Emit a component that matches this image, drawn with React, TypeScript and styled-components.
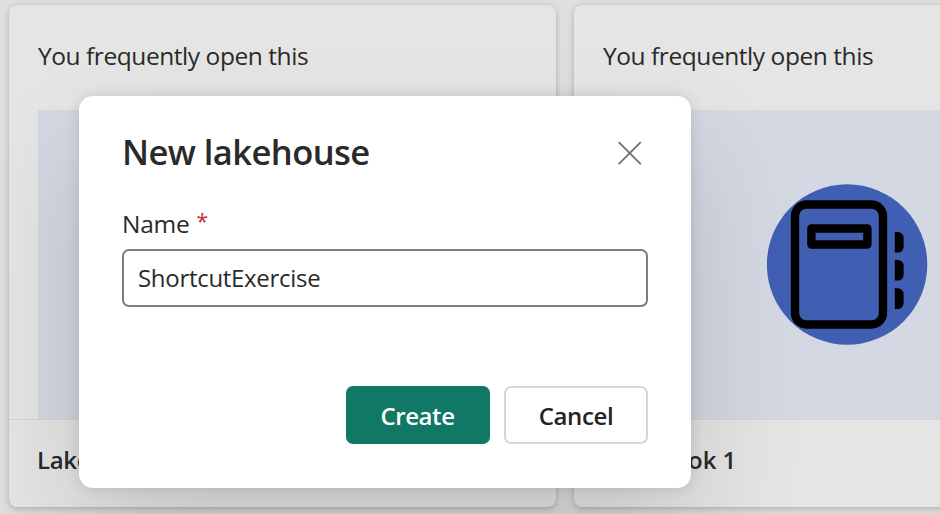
import React from "react";
import styled, { createGlobalStyle } from "styled-components";

const GlobalStyle = createGlobalStyle`
  * { box-sizing: border-box; }
  body {
    margin: 0;
    overflow: hidden;
    font-family: "Open Sans", "Noto Sans", sans-serif;
    font-size: 24.5px;
    color: #2a2a2a;
  }
  button, input { font: inherit; color: inherit; }
`;

const Page = styled.main`
  position: relative;
  width: 940px;
  height: 514px;
  overflow: hidden;
  background: #dfdfdf;
`;

const CardRow = styled.section`
  display: flex;
  gap: 18px;
  padding: 5px 0 0 9px;
`;

const Card = styled.article`
  flex: 0 0 547px;
  height: 502px;
  display: flex;
  flex-direction: column;
  border-radius: 8px;
  background: #e5e5e5;
  box-shadow: 0 0 4px rgba(0, 0, 0, 0.1), 0 3px 7px rgba(0, 0, 0, 0.14);
`;

const Reason = styled.p`
  margin: 0;
  height: 105px;
  padding: 34px 0 0 29px;
  line-height: 34px;
  letter-spacing: -0.44px;
  white-space: nowrap;
`;

const Preview = styled.div`
  height: 309px;
  margin: 0 29px;
  padding-top: 74px;
  display: flex;
  justify-content: center;
  align-items: flex-start;
  background: #d4d8e2;

  svg { display: block; }
`;

const CardTitle = styled.h3<{ $tracking: number }>`
  flex: 1;
  margin: 0;
  padding: 23px 0 0 28px;
  border-top: 1px solid #d2d2d2;
  font-size: 24px;
  font-weight: 600;
  line-height: 34px;
  letter-spacing: ${(p) => p.$tracking}px;
  white-space: nowrap;
`;

const Overlay = styled.div`
  position: absolute;
  inset: 0;
  padding: 95.5px 0 0 79px;
`;

const Dialog = styled.div`
  width: 612px;
  height: 392px;
  padding: 33px 43px 43.5px;
  display: flex;
  flex-direction: column;
  border-radius: 14px;
  background: #fff;
  box-shadow: 0 0 14px rgba(0, 0, 0, 0.12), 0 57px 115px rgba(0, 0, 0, 0.14);
`;

const DialogHeader = styled.header`
  display: flex;
  justify-content: space-between;
  height: 48px;
`;

const DialogTitle = styled.h2`
  margin: -1px 0 0;
  font-size: 34.5px;
  font-weight: 600;
  line-height: 48px;
  letter-spacing: -0.55px;
  white-space: nowrap;
`;

const CloseButton = styled.button`
  width: 36px;
  height: 48px;
  padding: 0;
  display: grid;
  place-items: center;
  border: 0;
  background: none;
`;

const Label = styled.label`
  display: flex;
  height: 34px;
  margin-top: 30px;
  line-height: 33px;
  letter-spacing: -0.25px;
  white-space: nowrap;
`;

const Required = styled.span`
  margin-left: 7px;
  font-size: 21px;
  line-height: 29px;
  color: #bc2f32;
`;

const NameInput = styled.input`
  width: 100%;
  height: 58px;
  margin-top: 8px;
  padding: 0 14px;
  border: 2px solid #7e7e7e;
  border-radius: 7px;
  outline: none;
  background: #fff;
  font-size: 24px;
  letter-spacing: -0.3px;
`;

const Actions = styled.footer`
  display: flex;
  justify-content: flex-end;
  gap: 14.5px;
  margin-top: auto;
`;

const Button = styled.button<{ $primary?: boolean }>`
  width: 144px;
  height: 58px;
  padding: 0;
  border: ${(p) => (p.$primary ? "0" : "2px solid #d6d6d6")};
  border-radius: 7px;
  background: ${(p) => (p.$primary ? "#117865" : "#fff")};
  color: ${(p) => (p.$primary ? "#fff" : "#242424")};
  font-size: 24px;
  font-weight: 600;
  letter-spacing: -0.4px;
`;

const NotebookIcon = () => (
  <svg width="162" height="162" viewBox="0 0 162 162">
    <circle cx="80.1" cy="80.5" r="80.2" fill="#405fb3" />
    <rect x="28" y="20.5" width="88" height="120" rx="11.5" fill="none" stroke="#000" strokeWidth="8.4" />
    <rect x="44.4" y="44.5" width="56" height="16" fill="none" stroke="#000" strokeWidth="8.4" strokeLinejoin="round" />
    {[48, 76, 104.3].map((y) => (
      <path key={y} d={`M127.8 ${y}h3.2a5.6 5.6 0 0 1 5.6 5.6v9.4a5.6 5.6 0 0 1-5.6 5.6h-3.2z`} fill="#000" />
    ))}
  </svg>
);

const CloseIcon = () => (
  <svg width="24" height="24" viewBox="0 0 24 24">
    <path d="M1.2 1.7 22.2 22.7M22.2 1.7 1.2 22.7" stroke="#707070" strokeWidth="1.8" strokeLinecap="round" />
  </svg>
);

export default function App() {
  return (
    <>
      <GlobalStyle />
      <Page>
        <CardRow>
          <Card>
            <Reason>You frequently open this</Reason>
            <Preview />
            <CardTitle $tracking={-0.3}>Lakehouse</CardTitle>
          </Card>
          <Card>
            <Reason>You frequently open this</Reason>
            <Preview>
              <NotebookIcon />
            </Preview>
            <CardTitle $tracking={-0.05}>Notebook 1</CardTitle>
          </Card>
        </CardRow>
        <Overlay>
          <Dialog role="dialog" aria-labelledby="dialog-title">
            <DialogHeader>
              <DialogTitle id="dialog-title">New lakehouse</DialogTitle>
              <CloseButton aria-label="Close">
                <CloseIcon />
              </CloseButton>
            </DialogHeader>
            <Label htmlFor="name">
              Name<Required>*</Required>
            </Label>
            <NameInput id="name" defaultValue="ShortcutExercise" spellCheck={false} />
            <Actions>
              <Button $primary>Create</Button>
              <Button>Cancel</Button>
            </Actions>
          </Dialog>
        </Overlay>
      </Page>
    </>
  );
}
